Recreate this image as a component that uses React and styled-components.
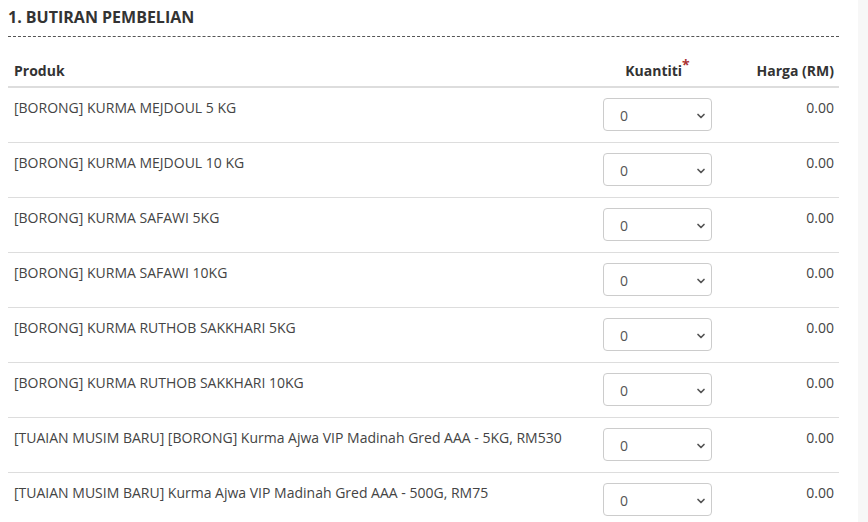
import React from 'react';
import styled, { createGlobalStyle } from 'styled-components';

const GlobalStyle = createGlobalStyle`
    body {
        margin: 0;
        background: #fff;
        font-family: "Open Sans", "Noto Sans", sans-serif;
        color: #444;
    }
`;

const products = [
    '[BORONG] KURMA MEJDOUL 5 KG',
    '[BORONG] KURMA MEJDOUL 10 KG',
    '[BORONG] KURMA SAFAWI 5KG',
    '[BORONG] KURMA SAFAWI 10KG',
    '[BORONG] KURMA RUTHOB SAKKHARI 5KG',
    '[BORONG] KURMA RUTHOB SAKKHARI 10KG',
    '[TUAIAN MUSIM BARU] [BORONG] Kurma Ajwa VIP Madinah Gred AAA - 5KG, RM530',
    '[TUAIAN MUSIM BARU] Kurma Ajwa VIP Madinah Gred AAA - 500G, RM75',
];

const Chevron = () => (
    <svg width="10" height="10" viewBox="0 0 10 10">
        <path d="M2 3.5 L5 6.5 L8 3.5" fill="none" stroke="#555" strokeWidth="1.7" strokeLinecap="round" strokeLinejoin="round" />
    </svg>
);

const App = () => {
    return (
        <Page>
            <GlobalStyle />
            <Main>
                <Title>1. BUTIRAN PEMBELIAN</Title>
                <Table>
                    <colgroup>
                        <col style={{ width: 578 }} />
                        <col style={{ width: 143 }} />
                        <col style={{ width: 110 }} />
                    </colgroup>
                    <thead>
                        <tr>
                            <Th>Produk</Th>
                            <Th align="center">Kuantiti<Star>*</Star></Th>
                            <Th align="right">Harga (RM)</Th>
                        </tr>
                    </thead>
                    <tbody>
                        {products.map((name, i) => (
                            <tr key={i}>
                                <Td>{name}</Td>
                                <Td align="center">
                                    <Select>
                                        <span>0</span>
                                        <Chevron />
                                    </Select>
                                </Td>
                                <Td align="right">0.00</Td>
                            </tr>
                        ))}
                    </tbody>
                </Table>
            </Main>
            <SideStrip />
        </Page>
    );
};

const Page = styled.div`
    display: flex;
    width: 868px;
    height: 522px;
    overflow: hidden;
`;

const Main = styled.div`
    width: 831px;
    padding: 0 19px 0 8px;
    flex-shrink: 0;
`;

const SideStrip = styled.div`
    flex: 1;
    background: #f7f7f7;
`;

const Title = styled.h3`
    margin: 0;
    padding: 6px 0 8px;
    font-size: 16px;
    font-weight: 700;
    color: #333;
    border-bottom: 1px dashed #555;
    line-height: 22px;
`;

const Table = styled.table`
    width: 831px;
    table-layout: fixed;
    margin-top: 16px;
    border-collapse: collapse;
    font-size: 14px;
    line-height: 20px;
`;

const Th = styled.th`
    text-align: ${p => p.align || 'left'};
    font-weight: 700;
    color: #333;
    padding: 8px 5px 5px 6px;
    border-bottom: 2px solid #ddd;
    &:nth-child(2) {
        padding-left: 0;
        padding-right: 0;
    }
`;

const Star = styled.sup`
    color: #a33;
    font-size: 14px;
    line-height: 0;
    position: relative;
    top: 0;
`;

const Td = styled.td`
    text-align: ${p => p.align || 'left'};
    vertical-align: top;
    padding: 10px 5px 0 6px;
    height: 44px;
    border-bottom: 1px solid #ddd;
    tr:last-child & {
        border-bottom: none;
    }
    &:nth-child(2) {
        padding-left: 0;
        padding-right: 0;
    }
`;

const Select = styled.div`
    display: inline-flex;
    align-items: center;
    justify-content: space-between;
    box-sizing: border-box;
    width: 109px;
    height: 33px;
    padding: 2px 5px 0 16px;
    border: 1px solid #ccc;
    border-radius: 4px;
    background: #fff;
    color: #555;
    font-size: 14px;
    text-align: left;
`;

export default App;
